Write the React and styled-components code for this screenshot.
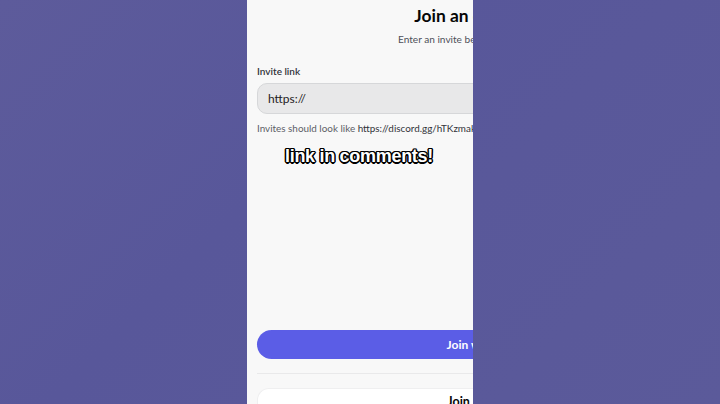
import React from "react";
import styled, { createGlobalStyle } from "styled-components";

const Global = createGlobalStyle`
  html, body { margin: 0; padding: 0; }
  body {
    width: 720px;
    height: 404px;
    overflow: hidden;
    background: #5b5a99;
    font-family: Lato, "Noto Sans", sans-serif;
  }
`;

const Stage = styled.div`
  width: 720px;
  height: 404px;
  display: flex;
  background: linear-gradient(135deg, #5d5b9b 0%, #58579a 40%, #5b5a9a 100%);
`;

const Phone = styled.div`
  position: relative;
  margin-left: 247px;
  width: 226px;
  height: 404px;
  overflow: hidden;
  background: #f8f8f8;
`;

const Screen = styled.div`
  width: 506px;
  height: 404px;
  box-sizing: border-box;
  padding: 0 10px;
  display: flex;
  flex-direction: column;
`;

const Title = styled.h1`
  margin: 5px 0 0;
  font-size: 17.4px;
  line-height: 22px;
  font-weight: 700;
  color: #060607;
  text-align: center;
  white-space: nowrap;
`;

const Subtitle = styled.p`
  margin: 6px 0 0;
  font-size: 10.1px;
  line-height: 13px;
  color: #4e5058;
  text-align: center;
  white-space: nowrap;
`;

const Label = styled.div`
  margin-top: 19px;
  font-size: 10px;
  line-height: 13px;
  font-weight: 600;
  color: #313338;
`;

const Input = styled.div`
  margin-top: 5px;
  height: 31px;
  box-sizing: border-box;
  border: 1px solid #d6d7d9;
  border-radius: 10px;
  background: #e8e8e9;
  display: flex;
  align-items: center;
  padding-left: 10px;
  font-size: 12px;
  color: #1f2023;
`;

const Hint = styled.div`
  margin-top: 8px;
  font-size: 9.9px;
  line-height: 13px;
  color: #5c5e66;
  white-space: nowrap;
  span { color: #313338; }
`;

const Spacer = styled.div`
  flex: 1;
`;

const PrimaryButton = styled.div`
  height: 29px;
  border-radius: 15px;
  background: #5b5de6;
  color: #ffffff;
  display: flex;
  align-items: center;
  justify-content: center;
  font-size: 12px;
  font-weight: 700;
`;

const Divider = styled.div`
  margin-top: 14px;
  height: 1px;
  background: #e9e9ea;
`;

const Card = styled.div`
  margin-top: 14px;
  height: 30px;
  border-radius: 12px 12px 0 0;
  background: #ffffff;
  border: 1px solid #efeff0;
  border-bottom: none;
  display: flex;
  justify-content: center;
  padding-top: 5px;
  font-size: 12.5px;
  font-weight: 700;
  color: #060607;
  margin-bottom: -20px;
`;

const Caption = styled.div`
  position: absolute;
  left: 38px;
  top: 145px;
  font-family: "Liberation Sans", Arial, sans-serif;
  font-weight: 700;
  font-size: 18px;
  line-height: 22px;
  letter-spacing: -0.3px;
  color: #ffffff;
  white-space: nowrap;
  text-shadow:
    1.5px 0 0 #000, -1.5px 0 0 #000, 0 1.5px 0 #000, 0 -1.5px 0 #000,
    1px 1px 0 #000, -1px 1px 0 #000, 1px -1px 0 #000, -1px -1px 0 #000;
`;

export default function App() {
  return (
    <>
      <Global />
      <Stage>
        <Phone>
          <Screen>
            <Title>Join an existing server</Title>
            <Subtitle>Enter an invite below to join an existing server</Subtitle>
            <Label>Invite link</Label>
            <Input>https://</Input>
            <Hint>
              Invites should look like <span>https://discord.gg/hTKzmak</span>
            </Hint>
            <Spacer />
            <PrimaryButton>Join with Invite Link</PrimaryButton>
            <Divider />
            <Card>Join a Student Hub</Card>
          </Screen>
          <Caption>link in comments!</Caption>
        </Phone>
      </Stage>
    </>
  );
}
